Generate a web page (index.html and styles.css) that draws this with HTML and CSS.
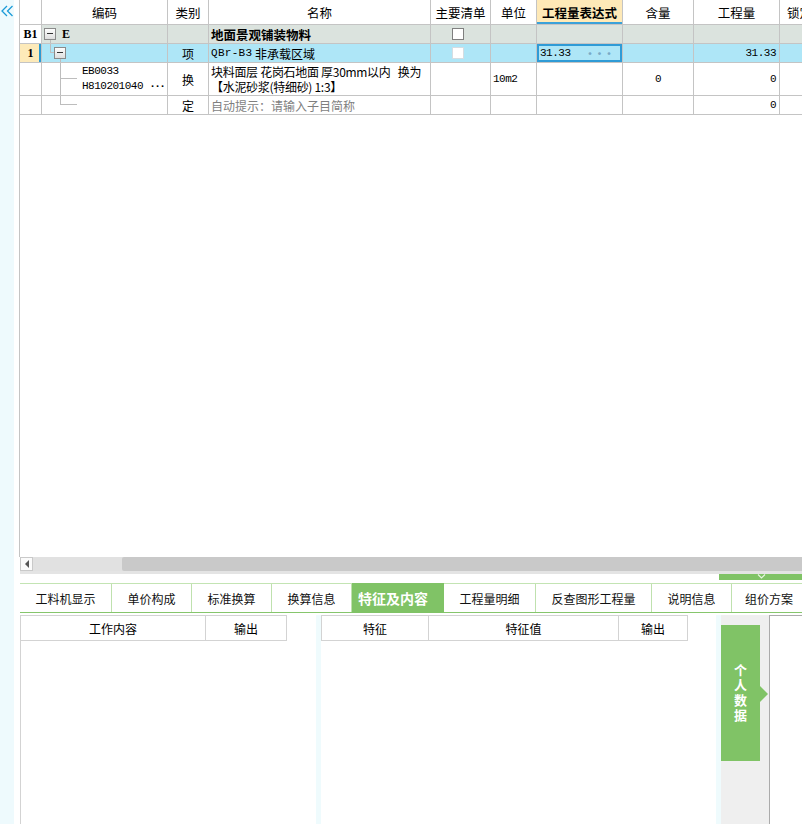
FILE: index.html
```html
<!DOCTYPE html>
<html lang="zh-CN">
<head>
<meta charset="utf-8">
<title>清单</title>
<link rel="stylesheet" href="styles.css">
</head>
<body>
<div class="app">
  <aside class="leftbar">
    <svg class="collapse" width="13" height="12" viewBox="0 0 13 12"><polyline points="6,1 1,6 6,11" fill="none" stroke="#1b9bd8" stroke-width="1.3"/><polyline points="11.5,1 6.5,6 11.5,11" fill="none" stroke="#1b9bd8" stroke-width="1.3"/></svg>
  </aside>
  <main class="main">
    <section class="grid">
      <div class="row head">
        <div class="c w-rn"></div>
        <div class="c w-code">编码</div>
        <div class="c w-type">类别</div>
        <div class="c w-name">名称</div>
        <div class="c w-main">主要清单</div>
        <div class="c w-unit">单位</div>
        <div class="c w-expr active-col">工程量表达式</div>
        <div class="c w-qty">含量</div>
        <div class="c w-amt">工程量</div>
        <div class="c w-lock">锁定</div>
      </div>
      <div class="row r19 b1">
        <div class="c w-rn rn">B1</div>
        <div class="c w-code code-b1"><span class="tbox"></span><span class="serif-b">E</span><i class="tl tl-b1v"></i></div>
        <div class="c w-type"></div>
        <div class="c w-name bold">地面景观铺装物料</div>
        <div class="c w-main center"><span class="chk"></span></div>
        <div class="c w-unit"></div>
        <div class="c w-expr"></div>
        <div class="c w-qty"></div>
        <div class="c w-amt"></div>
        <div class="c w-lock"></div>
      </div>
      <div class="row r19 sel">
        <div class="c w-rn rn rn-sel">1</div>
        <div class="c w-code code-r1"><i class="tl tl-r1a"></i><i class="tl tl-r1b"></i><span class="tbox"></span><i class="tl tl-r1c"></i></div>
        <div class="c w-type center">项</div>
        <div class="c w-name"><span class="mono mono-l">QBr-B3</span>&nbsp;非承载区域</div>
        <div class="c w-main center"><span class="chk chk-dis"></span></div>
        <div class="c w-unit"></div>
        <div class="c w-expr cur"><span class="mono">31.33</span><span class="dots">···</span></div>
        <div class="c w-qty"></div>
        <div class="c w-amt right"><span class="mono">31.33</span></div>
        <div class="c w-lock"></div>
      </div>
      <div class="row r33">
        <div class="c w-rn"></div>
        <div class="c w-code code-r3"><i class="tl tl-v"></i><i class="tl tl-h3"></i><div class="lines mono"><span>EB0033</span><span>H810201040 <b class="dots2">···</b></span></div></div>
        <div class="c w-type center">换</div>
        <div class="c w-name"><div class="lines nm"><span>块料面层 花岗石地面 厚30mm以内&nbsp;&nbsp;&nbsp;换为</span><span>【水泥砂浆(特细砂) 1:3】</span></div></div>
        <div class="c w-main"></div>
        <div class="c w-unit"><span class="mono">10m2</span></div>
        <div class="c w-expr"></div>
        <div class="c w-qty center"><span class="mono">0</span></div>
        <div class="c w-amt right"><span class="mono">0</span></div>
        <div class="c w-lock"></div>
      </div>
      <div class="row r19">
        <div class="c w-rn"></div>
        <div class="c w-code code-r4"><i class="tl tl-v4"></i><i class="tl tl-h4"></i></div>
        <div class="c w-type center">定</div>
        <div class="c w-name hint">自动提示：请输入子目简称</div>
        <div class="c w-main"></div>
        <div class="c w-unit"></div>
        <div class="c w-expr"></div>
        <div class="c w-qty"></div>
        <div class="c w-amt right"><span class="mono">0</span></div>
        <div class="c w-lock"></div>
      </div>
    </section>

    <div class="hscroll">
      <div class="sb-btn"><span class="sb-arrow"></span></div>
      <div class="sb-track"><div class="sb-thumb"></div></div>
    </div>

    <div class="splitter"><div class="grip"><svg width="9" height="5" viewBox="0 0 9 5"><polyline points="1,0.5 4.5,4 8,0.5" fill="none" stroke="#e9f6e3" stroke-width="1.2"/></svg></div></div>

    <nav class="tabs">
      <div class="tab t92">工料机显示</div>
      <div class="tab t80">单价构成</div>
      <div class="tab t80">标准换算</div>
      <div class="tab t80">换算信息</div>
      <div class="tab t92 on">特征及内容</div>
      <div class="tab t92">工程量明细</div>
      <div class="tab t116">反查图形工程量</div>
      <div class="tab t80">说明信息</div>
      <div class="tab last">组价方案</div>
    </nav>

    <section class="panels">
      <div class="panel p1">
        <div class="phead ph1">
          <div class="pc pc-work">工作内容</div>
          <div class="pc pc-out1">输出</div>
        </div>
        <div class="pbody pbody1"></div>
      </div>
      <div class="strip"></div>
      <div class="panel p2">
        <div class="phead ph2">
          <div class="pc pc-feat">特征</div>
          <div class="pc pc-val">特征值</div>
          <div class="pc pc-out2">输出</div>
        </div>
        <div class="pbody"></div>
      </div>
      <div class="strip"></div>
      <div class="side">
        <div class="sidetab"><span class="vt">个人数据</span></div>
      </div>
      <div class="rest"><div class="rest-in"></div></div>
    </section>
  </main>
</div>
</body>
</html>
```

FILE: styles.css
```css
* { box-sizing: border-box; margin: 0; padding: 0; }
html, body { width: 802px; height: 824px; overflow: hidden; background: #fff; }
body {
  font-family: "Noto Sans CJK SC", "Liberation Sans", sans-serif;
  font-size: 12px;
  color: #000;
}
.app { display: flex; height: 824px; }

.leftbar { width: 14px; flex: none; background: #eefafd; padding: 5px 0 0 1px; }
.collapse { display: block; }

.main { margin-left: 5px; width: 783px; flex: none; display: flex; flex-direction: column; overflow: hidden; }

/* ---------- grid ---------- */
.grid { height: 557px; flex: none; border-left: 1px solid #c4c4c4; overflow: hidden; }
.row { display: flex; width: max-content; border-bottom: 1px solid #c4c4c4; }
.row.head { height: 25px; font-size: 12.5px; }
.row.r19 { height: 19px; }
.row.r33 { height: 33px; }
.c {
  flex: none; height: 100%;
  display: flex; align-items: center;
  border-right: 1px solid #c4c4c4;
  overflow: hidden; white-space: nowrap;
  padding: 0 2px;
  position: relative;
}
.head .c { justify-content: center; }
.w-rn { width: 22px; justify-content: center; }
.w-code { width: 126px; }
.w-type { width: 41px; }
.w-name { width: 222px; }
.w-main { width: 60px; }
.w-unit { width: 46px; }
.w-expr { width: 86px; }
.w-qty { width: 71px; }
.w-amt { width: 86px; }
.w-lock { width: 40px; }
.head .w-lock { justify-content: flex-start; padding-left: 7px; }
.center { justify-content: center; }
.right { justify-content: flex-end; padding-right: 3px; }

.active-col { background: #fee9b7; font-weight: 700; box-shadow: inset 0 -2px 0 #3aa1d9; }

.rn { font-family: "Liberation Serif", serif; font-weight: 700; font-size: 12px; }
.serif-b { font-family: "Liberation Serif", serif; font-weight: 700; font-size: 12px; margin-left: 6px; }
.bold { font-weight: 700; font-size: 12.5px; padding-left: 2px; }

.b1 .c:not(.w-rn) { background: #dbe3de; }
.sel .c:not(.w-rn) { background: #aee6f7; }
.rn-sel { background: #fdeab9; box-shadow: inset -2px 0 0 #2b9ad2; }

.mono { font-family: "Liberation Mono", monospace; font-size: 11px; letter-spacing: -0.5px; }
.mono-l { letter-spacing: 0.3px; }
.w-expr .mono { margin-left: 1px; }
.cur { box-shadow: inset 0 0 0 2px #2f9bd6; }
.dots { margin-left: auto; margin-right: 7px; color: #7aa9c6; font-size: 11px; letter-spacing: -1.5px; font-weight: 700; }
.dots2 { font-weight: 700; letter-spacing: -1.5px; }
.hint { color: #7f7f7f; }

.lines { display: flex; flex-direction: column; line-height: 15px; }
.nm { letter-spacing: -0.3px; }

.chk { width: 12px; height: 12px; border: 1px solid #7f7f7f; background: #fff; margin-left: -5px; }
.chk-dis { border-color: #d4dde2; }

.tbox {
  width: 12px; height: 12px; flex: none;
  border: 1px solid #8a8a8a;
  background: linear-gradient(#fdfdfd, #dedede);
  position: relative;
}
.tbox::after {
  content: ""; position: absolute; left: 2px; top: 4px;
  width: 6px; height: 1px; background: #333;
}
.code-b1 { padding-left: 2px; }
.code-r1 { padding-left: 12px; }
.code-r3 { padding-left: 40px; }

/* tree connectors */
.tl { position: absolute; background: #bdbdbd; display: block; }
.tl-b1v { left: 8px; top: 15px; width: 1px; height: 4px; }
.tl-r1a { left: 8px; top: 0; width: 1px; height: 9px; }
.tl-r1b { left: 8px; top: 8px; width: 4px; height: 1px; }
.tl-r1c { left: 18px; top: 15px; width: 1px; height: 4px; }
.tl-v { left: 18px; top: 0; width: 1px; height: 33px; }
.tl-h3 { left: 18px; top: 15px; width: 17px; height: 1px; }
.tl-v4 { left: 18px; top: 0; width: 1px; height: 9px; }
.tl-h4 { left: 18px; top: 8px; width: 17px; height: 1px; }

/* ---------- scrollbar ---------- */
.hscroll { height: 17px; flex: none; margin-left: 1px; display: flex; background: #e4e4e4; }
.sb-btn {
  width: 13px; height: 14px; background: #fbfbfb; border: 1px solid #c9c9c9;
  display: flex; align-items: center; justify-content: center;
}
.sb-arrow { width: 0; height: 0; border-top: 4px solid transparent; border-bottom: 4px solid transparent; border-right: 4px solid #555; }
.sb-track { flex: 1; height: 14px; background: #e1e1e1; }
.sb-thumb { margin-left: 89px; height: 14px; background: #c9c9c9; border-radius: 2px 0 0 2px; }

.splitter { height: 9px; flex: none; display: flex; justify-content: flex-end; }
.grip { width: 83px; height: 6px; background: #80c366; display: flex; justify-content: center; }
.grip svg { display: block; margin-left: 2px; }

/* ---------- tabs ---------- */
.tabs {
  height: 30px; flex: none; margin-left: 1px; display: flex;
  border-top: 1px solid #c3e4b3; border-bottom: 1px solid #86c66c;
}
.tab {
  flex: none; display: flex; align-items: center; justify-content: center;
  border-right: 1px solid #bfe1ae; font-size: 12px; color: #111;
}
.t92 { width: 92px; }
.t80 { width: 80px; }
.t116 { width: 116px; }
.tab.last { flex: 1; border-right: none; padding-left: 4px; }
.tab.on { background: #80c366; color: #fff; font-weight: 700; font-size: 14px; border-right: none; margin-top: -1px; margin-bottom: -1px; padding-right: 10px; }

/* ---------- panels ---------- */
.panels { flex: 1; margin-left: 1px; display: flex; }
.panel { flex: none; display: flex; flex-direction: column; padding-top: 2px; }
.p1 { width: 296px; }
.p2 { width: 395px; }
.phead { height: 26px; display: flex; border: 1px solid #d3d3d3; flex: none; }
.ph1 { width: 267px; }
.ph2 { width: 367px; }
.pc { display: flex; align-items: center; justify-content: center; border-right: 1px solid #d3d3d3; font-size: 12px; }
.pc-work { width: 185px; }
.pc-out1 { flex: 1; border-right: none; }
.pc-feat { width: 107px; }
.pc-val { width: 190px; }
.pc-out2 { flex: 1; border-right: none; }
.pbody { flex: 1; }
.pbody1 { width: 267px; border-left: 1px solid #d3d3d3; }

.strip { width: 5px; flex: none; background: #effbfd; margin-top: 2px; }

.side { width: 49px; flex: none; background: #efefef; border-right: 1px solid #ababab; padding-top: 10px; margin-top: 2px; }
.sidetab {
  width: 39px; height: 136px; background: #80c366; position: relative;
  display: flex; align-items: center; justify-content: center;
}
.sidetab::after {
  content: ""; position: absolute; left: 39px; top: 61px;
  border-top: 8px solid transparent; border-bottom: 8px solid transparent; border-left: 8px solid #80c366;
}
.vt {
  writing-mode: vertical-rl; text-orientation: upright;
  color: #fff; font-weight: 700; font-size: 13px; letter-spacing: 2px;
  margin-top: 2px;
}
.rest { flex: 1; padding-top: 2px; }
.rest-in { height: 100%; border-top: 1px solid #ababab; }
```
